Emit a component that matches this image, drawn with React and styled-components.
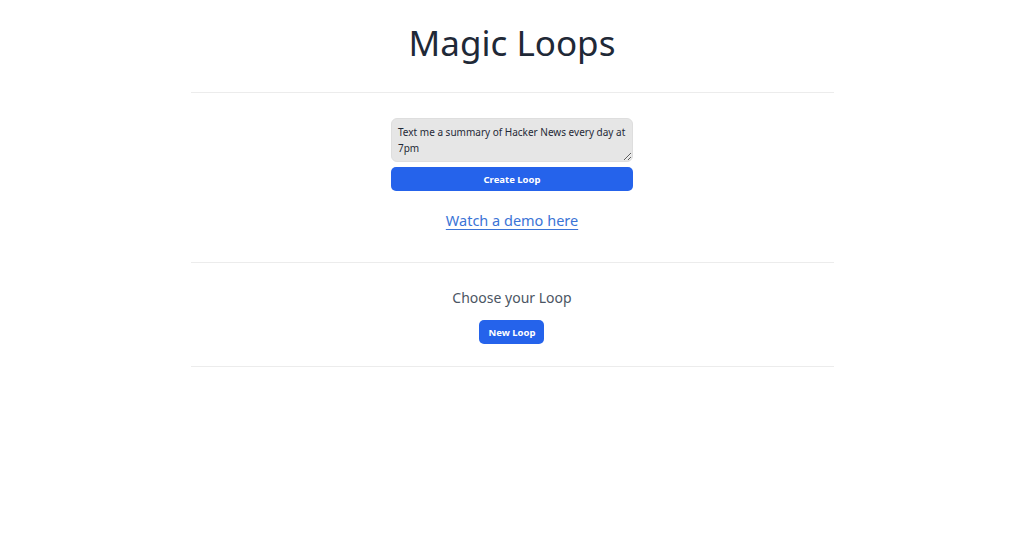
import React from "react";
import styled, { createGlobalStyle } from "styled-components";

const GlobalStyle = createGlobalStyle`
  * { box-sizing: border-box; }
  body {
    margin: 0;
    background: #ffffff;
    font-family: "Noto Sans", "Open Sans", sans-serif;
    color: #1f2937;
  }
`;

export default function App() {
  return (
    <>
      <GlobalStyle />
      <Page>
        <Title>Magic Loops</Title>
        <Divider />
        <CreateSection>
          <PromptBox defaultValue="Text me a summary of Hacker News every day at 7pm" />
          <PrimaryButton $wide>Create Loop</PrimaryButton>
          <DemoLink href="#">Watch a demo here</DemoLink>
        </CreateSection>
        <Divider />
        <ChooseSection>
          <SubTitle>Choose your Loop</SubTitle>
          <PrimaryButton>New Loop</PrimaryButton>
        </ChooseSection>
        <Divider />
      </Page>
    </>
  );
}

const Page = styled.div`
  width: 643px;
  margin: 0 auto;
  display: flex;
  flex-direction: column;
  align-items: center;
`;

const Title = styled.h1`
  margin: 0;
  padding: 20px 0 26px;
  font-size: 35px;
  font-weight: 400;
  line-height: 46px;
  color: #1f2937;
`;

const Divider = styled.div`
  width: 100%;
  height: 1px;
  background: #ececec;
`;

const CreateSection = styled.div`
  display: flex;
  flex-direction: column;
  align-items: center;
  padding: 25px 0 31px;
`;

const PromptBox = styled.textarea`
  width: 242px;
  height: 44px;
  padding: 5px 6px;
  border: 1px solid #dedede;
  border-radius: 6px;
  background: #e6e6e6;
  font-family: "Noto Sans", "Open Sans", sans-serif;
  font-size: 10px;
  line-height: 16px;
  color: #1f2937;
  resize: vertical;
  outline: none;
`;

const PrimaryButton = styled.button`
  margin-top: ${(p) => (p.$wide ? "5px" : "0")};
  width: ${(p) => (p.$wide ? "242px" : "auto")};
  height: 24px;
  padding: 0 9px;
  border: none;
  border-radius: 5px;
  background: #2563eb;
  color: #ffffff;
  font-family: "Noto Sans", "Open Sans", sans-serif;
  font-size: 9.5px;
  font-weight: 700;
  cursor: pointer;
`;

const DemoLink = styled.a`
  margin-top: 18px;
  font-size: 14.5px;
  line-height: 22px;
  color: #3b74d6;
  text-decoration: underline;
  text-underline-offset: 3px;
`;

const ChooseSection = styled.div`
  display: flex;
  flex-direction: column;
  align-items: center;
  padding: 24px 0 22px;
`;

const SubTitle = styled.h2`
  margin: 0 0 11px;
  font-size: 14px;
  font-weight: 400;
  line-height: 22px;
  color: #4b5563;
`;
